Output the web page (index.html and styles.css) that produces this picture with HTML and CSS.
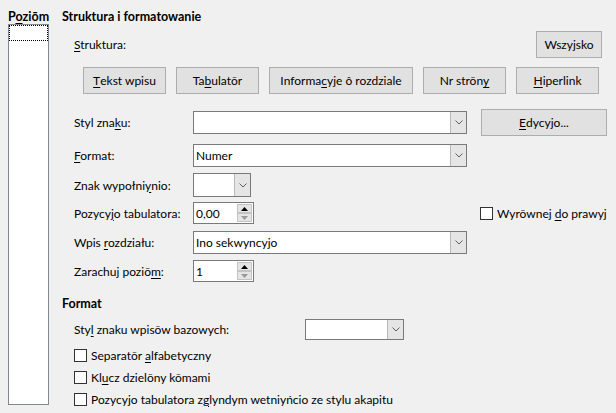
FILE: index.html
```html
<!DOCTYPE html>
<html lang="szl">
<head>
<meta charset="utf-8">
<title>Struktura i formatowanie</title>
<link rel="stylesheet" href="styles.css">
</head>
<body>
<div class="dlg">
  <div class="level">
    <div class="level-h">P<u>o</u>ziōm</div>
    <div class="level-list"><div class="focus"></div></div>
  </div>
  <div class="main">
    <div class="sec-title">Struktura i formatowanie</div>
    <div class="struct-row">
      <span><u>S</u>truktura:</span>
      <button class="btn btn-all">Wszyjsko</button>
    </div>
    <div class="btn-row">
      <button class="btn w83"><u>T</u>ekst wpisu</button>
      <button class="btn w83">Ta<u>b</u>ulatōr</button>
      <button class="btn w144">Informa<u>c</u>yje ô rozdziale</button>
      <button class="btn w83">Nr strōn<u>y</u></button>
      <button class="btn w83"><u>H</u>iperlink</button>
    </div>
    <div class="form">
      <span class="lbl">Styl zna<u>k</u>u:</span>
      <div class="combo wide"><span class="val"></span><span class="dd"><svg width="8" height="5" viewBox="0 0 8 5"><path d="M0.5 0.5 L4 4 L7.5 0.5" fill="none" stroke="#606060" stroke-width="1"/></svg></span></div>
      <button class="btn btn-edit"><u>E</u>dycyjo...</button>

      <span class="lbl"><u>F</u>ormat:</span>
      <div class="combo wide"><span class="val">Numer</span><span class="dd"><svg width="8" height="5" viewBox="0 0 8 5"><path d="M0.5 0.5 L4 4 L7.5 0.5" fill="none" stroke="#606060" stroke-width="1"/></svg></span></div>
      <span></span>

      <span class="lbl">Znak wypołni<u>y</u>nio:</span>
      <div class="combo narrow"><span class="val"></span><span class="dd"><svg width="8" height="5" viewBox="0 0 8 5"><path d="M0.5 0.5 L4 4 L7.5 0.5" fill="none" stroke="#606060" stroke-width="1"/></svg></span></div>
      <span></span>

      <span class="lbl">Pozycy<u>j</u>o tabulatora:</span>
      <div class="spin"><span class="val">0,00</span><span class="sb"><span class="up"><svg width="7" height="4" viewBox="0 0 7 4"><path d="M0 4 L3.5 0 L7 4 Z" fill="#000"/></svg></span><span class="down"><svg width="7" height="4" viewBox="0 0 7 4"><path d="M0 0 L3.5 4 L7 0 Z" fill="#9a9a9a"/></svg></span></span></div>
      <label class="chk right"><span class="box"></span><span>Wyrōwnej <u>d</u>o prawyj</span></label>

      <span class="lbl">Wpis <u>r</u>ozdziału:</span>
      <div class="combo wide"><span class="val">Ino sekwyncyjo</span><span class="dd"><svg width="8" height="5" viewBox="0 0 8 5"><path d="M0.5 0.5 L4 4 L7.5 0.5" fill="none" stroke="#606060" stroke-width="1"/></svg></span></div>
      <span></span>

      <span class="lbl">Zarachuj poziō<u>m</u>:</span>
      <div class="spin"><span class="val">1</span><span class="sb"><span class="up"><svg width="7" height="4" viewBox="0 0 7 4"><path d="M0 4 L3.5 0 L7 4 Z" fill="#000"/></svg></span><span class="down"><svg width="7" height="4" viewBox="0 0 7 4"><path d="M0 0 L3.5 4 L7 0 Z" fill="#9a9a9a"/></svg></span></span></div>
      <span></span>
    </div>

    <div class="sec-title fmt">Format</div>
    <div class="base-row">
      <span class="base-lbl">Sty<u>l</u> znaku wpisōw bazowych:</span>
      <div class="combo small"><span class="val"></span><span class="dd"><svg width="8" height="5" viewBox="0 0 8 5"><path d="M0.5 0.5 L4 4 L7.5 0.5" fill="none" stroke="#606060" stroke-width="1"/></svg></span></div>
    </div>
    <div class="checks">
      <label class="chk"><span class="box"></span><span>Separatōr <u>a</u>lfabetyczny</span></label>
      <label class="chk"><span class="box"></span><span>Kl<u>u</u>cz dzielōny kōmami</span></label>
      <label class="chk"><span class="box"></span><span>Pozycyjo tabulatora z<u>g</u>lyndym wetniyńcio ze stylu akapitu</span></label>
    </div>
  </div>
</div>
</body>
</html>
```
FILE: styles.css
```css
* { box-sizing: border-box; }
html, body { margin: 0; }
body {
  background: #f0f0f0;
  font-family: Lato, "Noto Sans", sans-serif;
  font-size: 12px;
  color: #000;
  width: 616px;
  height: 413px;
  overflow: hidden;
}
u { text-underline-offset: 2px; }
.dlg { display: flex; padding-left: 8px; }
.level { width: 41px; display: flex; flex-direction: column; }
.level-h { font-weight: bold; height: 24px; padding-top: 9px; line-height: 15px; font-size: 12.5px; }
.level-list { height: 381px; border: 1px solid #828790; background: #fff; }
.focus { height: 16px; border: 1px dotted #000; }
.main { margin-left: 13px; flex: 1; display: flex; flex-direction: column; }
.sec-title { font-weight: bold; line-height: 16px; margin-top: 9px; font-size: 12.5px; }
.sec-title.fmt { margin-top: 10px; }
.struct-row {
  display: flex; justify-content: space-between; align-items: center;
  margin-top: 6px; padding-left: 12px; padding-right: 14px; height: 27px;
}
.btn {
  height: 27px; background: #e1e1e1; border: 1px solid #adadad;
  font: inherit; color: #000; padding: 0; white-space: nowrap;
  display: flex; align-items: center; justify-content: center;
}
.btn-all { width: 66px; }
.btn-row { display: flex; gap: 10px; margin-top: 9px; padding-left: 21px; }
.w83 { width: 83px; }
.w144 { width: 144px; }
.form {
  display: grid;
  grid-template-columns: 119px 288px auto;
  grid-template-rows: 33px 33px 26px 30px 28px 30px;
  align-items: center;
  margin-top: 12px;
  padding-left: 12px;
}
.btn-edit { width: 126px; }
.combo {
  display: flex; height: 23px; border: 1px solid #7a7a7a; background: #fff;
}
.combo.wide { width: 274px; }
.combo.narrow { width: 58px; height: 24px; }
.combo.small { width: 99px; height: 21px; }
.val { flex: 1; padding-left: 2px; display: flex; align-items: center; }
.dd {
  width: 16px; background: #e5e5e5; border-left: 1px solid #b9b9b9;
  display: flex; align-items: center; justify-content: center;
}
.spin {
  display: flex; width: 61px; height: 22px; border: 1px solid #7a7a7a; background: #fff;
}
.sb { width: 16px; display: flex; flex-direction: column; padding: 1px 1px 1px 0; }
.sb span {
  flex: 1; background: #e5e5e5; border: 1px solid #c4c4c4;
  display: flex; align-items: center; justify-content: center;
}
.chk { display: flex; align-items: center; gap: 4px; white-space: nowrap; }
.chk.right { margin-left: -1px; }
.box { width: 13px; height: 13px; border: 1px solid #333; background: #fff; flex: none; }
.base-row {
  display: flex; align-items: center; height: 24px; margin-top: 5px; padding-left: 12px;
}
.base-lbl { width: 231px; }
.checks { display: flex; flex-direction: column; padding-left: 12px; margin-top: 3px; }
.checks .chk { height: 22px; }
```
